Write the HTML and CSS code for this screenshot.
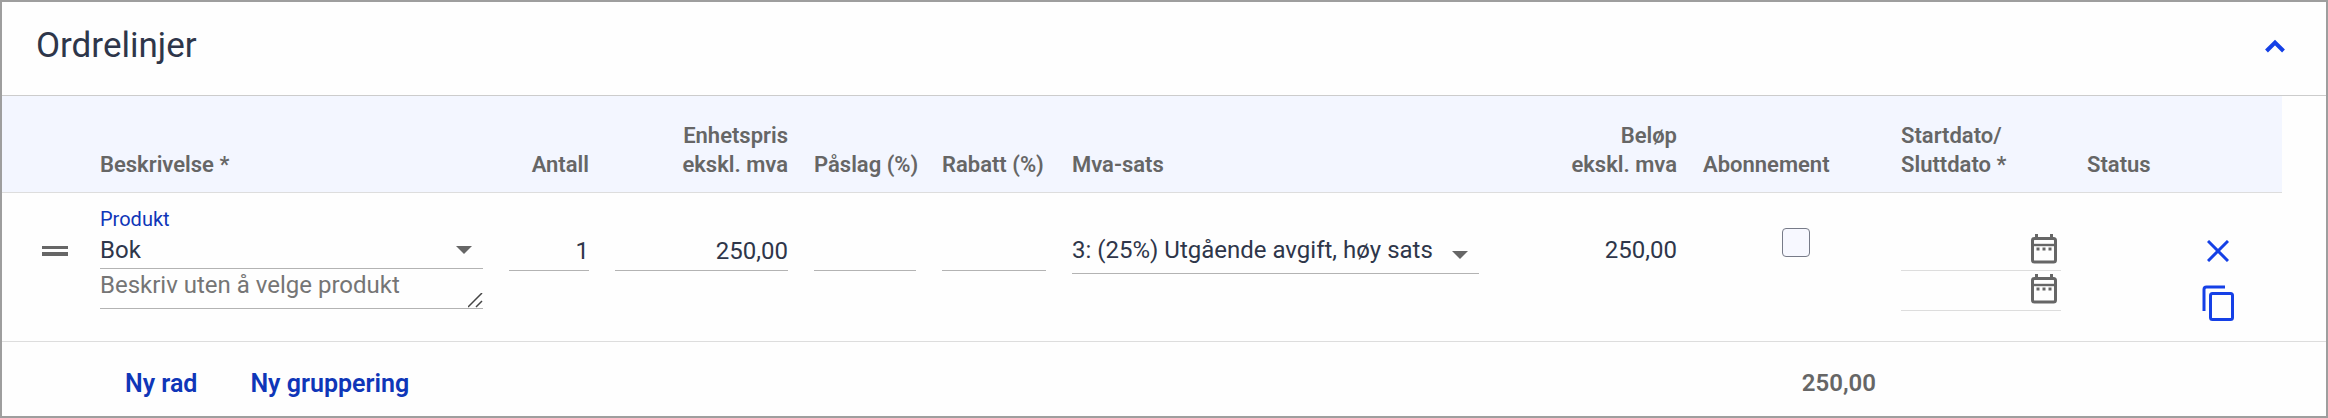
FILE: index.html
```
<!DOCTYPE html>
<html lang="no">
<head>
    <meta charset="UTF-8" />
    <meta name="viewport" content="width=device-width, initial-scale=1" />
    <title>Ordrelinjer</title>
    <link rel="stylesheet" href="styles.css">
</head>
<body>

    <section class="panel">
        <header class="panel-header">
            <h1>Ordrelinjer</h1>
            <button type="button" class="icon-btn" aria-label="Skjul ordrelinjer">
                <svg width="20" height="14" viewBox="0 0 20 14"><path d="M1.5 12 10 3.5 18.5 12" fill="none" stroke="currentColor" stroke-width="4" /></svg>
            </button>
        </header>

        <div class="table-wrap">
            <table class="lines">
                <colgroup>
                    <col class="col-drag"><col><col class="col-qty"><col class="col-price">
                    <col class="col-markup"><col class="col-discount"><col class="col-vat"><col class="col-amount">
                    <col class="col-sub"><col class="col-date"><col class="col-status"><col class="col-actions">
                </colgroup>
                <thead>
                    <tr>
                        <th></th>
                        <th>Beskrivelse *</th>
                        <th class="num">Antall</th>
                        <th class="num">Enhetspris<br>ekskl. mva</th>
                        <th>Påslag (%)</th>
                        <th>Rabatt (%)</th>
                        <th>Mva-sats</th>
                        <th class="num">Beløp<br>ekskl. mva</th>
                        <th>Abonnement</th>
                        <th>Startdato/<br>Sluttdato *</th>
                        <th>Status</th>
                        <th></th>
                    </tr>
                </thead>
                <tbody>
                    <tr>
                        <td class="drag-cell">
                            <svg width="26" height="10" viewBox="0 0 26 10"><path d="M0 0h26v3H0zM0 6h26v4H0z" fill="#666" /></svg>
                        </td>
                        <td class="desc-cell">
                            <label class="float-label" for="product">Produkt</label>
                            <div class="select-box">
                                <select class="field" id="product">
                                    <option>Bok</option>
                                </select>
                            </div>
                            <textarea class="field" rows="1" aria-label="Beskrivelse" placeholder="Beskriv uten å velge produkt"></textarea>
                        </td>
                        <td><input class="field num" type="text" value="1" aria-label="Antall"></td>
                        <td><input class="field num" type="text" value="250,00" aria-label="Enhetspris"></td>
                        <td><input class="field num" type="text" aria-label="Påslag"></td>
                        <td><input class="field num" type="text" aria-label="Rabatt"></td>
                        <td>
                            <div class="select-box vat">
                                <select class="field" aria-label="Mva-sats">
                                    <option>3: (25%) Utgående avgift, høy sats</option>
                                </select>
                            </div>
                        </td>
                        <td class="num"><div class="value">250,00</div></td>
                        <td class="check-cell"><input class="check" type="checkbox" aria-label="Abonnement"></td>
                        <td>
                            <div class="date">
                                <input type="text" aria-label="Startdato">
                                <button type="button" class="icon-btn" aria-label="Velg startdato">
                                    <svg width="26" height="30" viewBox="0 0 26 30"><path d="M5.5 0v4M20.5 0v4" stroke="currentColor" stroke-width="3" /><rect x="1.5" y="4.5" width="23" height="23.5" rx="2" fill="none" stroke="currentColor" stroke-width="3" /><path d="M1 11h24" stroke="currentColor" stroke-width="2.4" /><path d="M5.5 13.5h3v3h-3zM11.5 13.5h3v3h-3zM17.5 13.5h3v3h-3z" fill="currentColor" /></svg>
                                </button>
                            </div>
                            <div class="date">
                                <input type="text" aria-label="Sluttdato">
                                <button type="button" class="icon-btn" aria-label="Velg sluttdato">
                                    <svg width="26" height="30" viewBox="0 0 26 30"><path d="M5.5 0v4M20.5 0v4" stroke="currentColor" stroke-width="3" /><rect x="1.5" y="4.5" width="23" height="23.5" rx="2" fill="none" stroke="currentColor" stroke-width="3" /><path d="M1 11h24" stroke="currentColor" stroke-width="2.4" /><path d="M5.5 13.5h3v3h-3zM11.5 13.5h3v3h-3zM17.5 13.5h3v3h-3z" fill="currentColor" /></svg>
                                </button>
                            </div>
                        </td>
                        <td></td>
                        <td>
                            <div class="actions">
                                <button type="button" class="icon-btn" aria-label="Slett rad">
                                    <svg width="22" height="22" viewBox="0 0 22 22"><path d="M1 1 21 21M21 1 1 21" stroke="currentColor" stroke-width="3" /></svg>
                                </button>
                                <button type="button" class="icon-btn" aria-label="Kopier rad">
                                    <svg width="32" height="36" viewBox="0 0 32 36"><path d="M2 26V4.5q0-2.5 2.5-2.5h18.500" fill="none" stroke="currentColor" stroke-width="3" /><rect x="8.5" y="8.5" width="22" height="26" rx="2" fill="none" stroke="currentColor" stroke-width="3" /></svg>
                                </button>
                            </div>
                        </td>
                    </tr>
                </tbody>
            </table>
        </div>

        <footer class="panel-footer">
            <button type="button" class="text-btn">Ny rad</button>
            <button type="button" class="text-btn">Ny gruppering</button>
            <span class="total">250,00</span>
        </footer>
    </section>

</body>
</html>
```
FILE: styles.css
```
* {
    box-sizing: border-box;
}

body {
    margin: 0;
    font-family: Roboto, "Liberation Sans", sans-serif;
    font-size: 24px;
    color: #2e364a;
    background-color: #fff;
}

input, select, textarea, button {
    font: inherit;
    color: inherit;
}

svg {
    display: block;
}

.panel {
    border: 2px solid #9e9e9e;
    background-color: #fefefe;
}

.panel-header {
    display: flex;
    align-items: center;
    justify-content: space-between;
    height: 94px;
    padding: 0 41px 5px 34px;
    border-bottom: 1px solid #ccc;
}

h1 {
    margin: 0;
    font-size: 35px;
    font-weight: 400;
    line-height: 40px;
}

.icon-btn {
    padding: 0;
    border: none;
    background: none;
    color: #1540e6;
    cursor: pointer;
}

.table-wrap {
    padding-right: 44px;
    border-bottom: 1px solid #ddd;
}

.lines {
    width: 100%;
    table-layout: fixed;
    border-collapse: separate;
    border-spacing: 0;
}

.col-drag { width: 85px; }
.col-qty { width: 106px; }
.col-price { width: 199px; }
.col-markup { width: 128px; }
.col-discount { width: 130px; }
.col-vat { width: 433px; }
.col-amount { width: 198px; }
.col-sub { width: 198px; }
.col-date { width: 186px; }
.col-status { width: 80px; }
.col-actions { width: 128px; }

th {
    height: 97px;
    padding: 0 13px 13px;
    border-bottom: 1px solid #ddd;
    background-color: #f3f6ff;
    color: #666;
    font-size: 22px;
    font-weight: 600;
    line-height: 29px;
    text-align: left;
    vertical-align: bottom;
    white-space: nowrap;
}

td {
    height: 148px;
    padding: 38px 13px 0;
    vertical-align: top;
}

.num {
    text-align: right;
}

.drag-cell {
    padding: 53px 0 0 40px;
}

.desc-cell {
    padding-top: 14px;
}

.float-label {
    display: block;
    color: #0f36b8;
    font-size: 20px;
    line-height: 24px;
}

.field {
    display: block;
    width: 100%;
    height: 40px;
    margin: 0;
    padding: 0;
    border: none;
    border-bottom: 1px solid #b3b3b3;
    border-radius: 0;
    background: none;
    outline: none;
    appearance: none;
}

.select-box {
    position: relative;
}

.select-box .field {
    height: 38px;
}

.select-box::after {
    content: "";
    position: absolute;
    right: 11px;
    top: 15px;
    border: 8px solid transparent;
    border-top-color: #666;
    border-bottom: none;
    pointer-events: none;
}

.select-box.vat .field {
    height: 43px;
    padding-bottom: 4px;
}

.select-box.vat::after {
    top: 20px;
}

textarea.field {
    line-height: 32px;
    resize: vertical;
    overflow: hidden;
}

textarea::placeholder {
    color: #757575;
}

textarea::-webkit-resizer {
    background: url("data:image/svg+xml,%3Csvg xmlns='http://www.w3.org/2000/svg' viewBox='0 0 15 15'%3E%3Cpath d='M0 14 14 0M8 14l6-6' stroke='%23444' stroke-width='1.5'/%3E%3C/svg%3E") no-repeat;
}

.value {
    line-height: 38px;
}

.check-cell {
    padding: 35px 78px 0 0;
}

.check {
    display: block;
    width: 28px;
    height: 29px;
    margin: 0 0 0 auto;
    border: 1px solid #777b88;
    border-radius: 4px;
    background-color: #f7f8ff;
    appearance: none;
}

.date {
    display: flex;
    height: 40px;
    padding: 3px 4px 0 0;
    border-bottom: 1px solid #ddd;
}

.date input {
    flex: 1;
    min-width: 0;
    padding: 0;
    border: none;
    background: none;
    outline: none;
}

.date .icon-btn {
    align-self: flex-start;
    color: #666;
}

.actions {
    display: flex;
    flex-direction: column;
    align-items: center;
    gap: 23px;
    padding-top: 9px;
}

.panel-footer {
    display: flex;
    align-items: center;
    gap: 53px;
    height: 74px;
    padding: 8px 450px 0 123px;
}

.text-btn {
    padding: 0;
    border: none;
    background: none;
    color: #0f36b8;
    font-size: 25px;
    font-weight: 600;
    cursor: pointer;
}

.total {
    margin-left: auto;
    color: #666;
    font-weight: 600;
}
```
